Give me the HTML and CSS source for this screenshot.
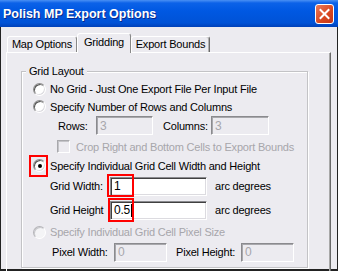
FILE: index.html
```html
<!DOCTYPE html>
<html>
<head>
<meta charset="utf-8">
<link rel="stylesheet" href="styles.css">
</head>
<body>
<div class="window">
  <div class="titlebar">
    <span class="title">Polish MP Export Options</span>
    <span class="close">
      <svg width="19" height="20" viewBox="0 0 19 20"><path d="M5.5 6 L13.5 14 M13.5 6 L5.5 14" stroke="#fff" stroke-width="2" stroke-linecap="square" fill="none"/></svg>
    </span>
  </div>
  <div class="client">
    <div class="tabs">
      <div class="tab t-map">Map Options</div>
      <div class="tab t-grid active">Gridding</div>
      <div class="tab t-bounds">Export Bounds</div>
    </div>
    <div class="panel">
      <fieldset class="group">
        <legend>Grid Layout</legend>
        <div class="row r-a"><span class="radio"></span><span>No Grid - Just One Export File Per Input File</span></div>
        <div class="row r-b"><span class="radio"></span><span>Specify Number of Rows and Columns</span></div>
        <div class="row r-c">
          <span class="lbl lbl-rows">Rows:</span><span class="field disabled w-rows">3</span>
          <span class="lbl lbl-cols">Columns:</span><span class="field disabled w-cols">3</span>
        </div>
        <div class="row r-d"><span class="check"></span><span class="dim">Crop Right and Bottom Cells to Export Bounds</span></div>
        <div class="row r-e"><span class="radio checked"><span class="mark mark-radio"></span></span><span>Specify Individual Grid Cell Width and Height</span></div>
        <div class="row r-f">
          <span class="lbl lbl-grid">Grid Width:</span><span class="field w-grid"><span class="mark mark-w"></span>1</span><span class="unit">arc degrees</span>
        </div>
        <div class="row r-g">
          <span class="lbl lbl-grid">Grid Height</span><span class="field w-grid"><span class="mark mark-h"></span>0.5<span class="caret"></span></span><span class="unit">arc degrees</span>
        </div>
        <div class="row r-h"><span class="radio disabled"></span><span class="dim">Specify Individual Grid Cell Pixel Size</span></div>
        <div class="row r-i">
          <span class="lbl lbl-pw">Pixel Width:</span><span class="field disabled w-px">0</span>
          <span class="lbl lbl-ph">Pixel Height:</span><span class="field disabled w-px">0</span>
        </div>
      </fieldset>
    </div>
  </div>
</div>
</body>
</html>
```
FILE: styles.css
```css
* { box-sizing: border-box; }
body {
  margin: 0;
  font-family: "Liberation Sans", Arial, sans-serif;
  font-size: 11px;
  letter-spacing: -0.2px;
  color: #000;
}
.window {
  width: 338px;
  height: 271px;
  overflow: hidden;
  background: #ecebf0;
}
.titlebar {
  height: 27px;
  display: flex;
  align-items: center;
  justify-content: space-between;
  padding: 0 4px 0 3px;
  background: linear-gradient(#4a90f4 0, #0c62e8 3px, #0058e2 40%, #0052d6 85%, #0040b8 100%);
}
.title {
  color: #fff;
  font-weight: bold;
  font-size: 12.5px;
  letter-spacing: 0;
  text-shadow: 1px 1px #0a2a8a;
  margin-top: 1px;
}
.close {
  width: 19px;
  height: 20px;
  border: 1px solid #fff;
  border-radius: 3px;
  background: linear-gradient(135deg, #e97a5c, #d8461f 60%, #c2361a);
  display: flex;
  margin-top: 1px;
}
.close svg { display: block; margin: -1px; }
.client {
  height: 244px;
  border: 1px solid #222;
  border-top: 0;
  border-bottom-width: 2px;
  padding: 6px 0 0 5px;
}
.tabs {
  display: flex;
  align-items: flex-end;
  height: 19px;
  padding-left: 1px;
  position: relative;
  z-index: 1;
}
.tab {
  height: 16px;
  line-height: 15px;
  text-align: center;
  border: 1px solid;
  border-bottom: 0;
  border-color: #fff #888 transparent #fff;
  border-radius: 3px 3px 0 0;
  background: #ecebf0;
}
.t-map { width: 70px; }
.t-grid { width: 54px; }
.t-bounds { width: 79px; box-shadow: inset -1px 0 #b0b0b0; border-right-color: #6a6a6a; }
.tab.active {
  height: 20px;
  margin-bottom: -1px;
  line-height: 17px;
}
.panel {
  width: 325px;
  height: 230px;
  border: 1px solid;
  border-color: #fff #6a6a6a #6a6a6a #fff;
  box-shadow: inset -1px 0 #a8a8a8;
  padding-top: 11px;
}
.group {
  margin: 0 0 0 14px;
  padding: 0 0 5px 0;
  width: 287px;
  border: 1px solid #c3c3c6;
  box-shadow: inset 1px 1px #fff, 1px 1px #fff;
  min-inline-size: 0;
}
.group legend {
  margin-left: 4px;
  padding: 0 3px;
  line-height: 14px;
  background: #ecebf0;
}
.row {
  display: flex;
  align-items: center;
  white-space: nowrap;
}
.r-a { height: 18px; margin-top: 2px; padding-left: 11px; }
.r-b { height: 17px; padding-left: 11px; }
.r-c { height: 21px; padding-left: 36px; }
.r-d { height: 21px; padding-left: 35px; }
.r-e { height: 17px; padding-left: 11px; }
.r-f { height: 24px; padding-left: 28px; }
.r-g { height: 24px; padding-left: 28px; }
.r-h { height: 20px; padding-left: 11px; }
.r-i { height: 20px; padding-left: 30px; }
.radio {
  position: relative;
  width: 13px;
  height: 13px;
  flex: none;
  margin-right: 4px;
  border-radius: 50%;
  border: 1px solid;
  border-color: #8c8c8c #fff #fff #8c8c8c;
  box-shadow: inset 1px 1px #555, inset -1px -1px #dcdbe0;
  background: #fff;
}
.radio.checked::after {
  content: "";
  position: absolute;
  left: 3.5px;
  top: 3.5px;
  width: 4px;
  height: 4px;
  border-radius: 50%;
  background: #000;
}
.radio.disabled {
  border-color: #b4b4b8 #fff #fff #b4b4b8;
  box-shadow: inset 1px 1px #c8c8cc;
  background: #f4f4f6;
}
.check {
  width: 13px;
  height: 13px;
  flex: none;
  margin-right: 6px;
  border: 1px solid;
  border-color: #a8a8ac #fff #fff #a8a8ac;
  box-shadow: inset 1px 1px #c4c4c8;
  background: #ecebf0;
}
.dim { color: #a7a6ab; }
.lbl { flex: none; }
.lbl-rows { width: 38px; }
.lbl-cols { width: 48px; margin-left: 10px; }
.lbl-grid { width: 60px; }
.lbl-pw { width: 62px; }
.lbl-ph { width: 65px; margin-left: 9px; }
.field {
  position: relative;
  display: flex;
  align-items: center;
  height: 19px;
  padding-left: 3px;
  border: 1px solid;
  border-color: #8a8a8e #fff #fff #8a8a8e;
  box-shadow: inset 1px 1px #404040, inset -1px -1px #dcdbe0;
  background: #fff;
  font-size: 12px;
}
.field.disabled {
  background: #ecebf0;
  color: #a7a6ab;
  box-shadow: inset 1px 1px #a8a8ac;
}
.w-rows { width: 57px; }
.w-cols { width: 58px; }
.w-grid { width: 97px; }
.w-px { width: 53px; }
.unit { margin-left: 8px; }
.caret {
  display: inline-block;
  width: 1px;
  height: 13px;
  background: #000;
  margin-left: 1px;
}
.mark {
  position: absolute;
  border: 2px solid #ff0000;
}
.mark-radio { left: -5px; top: -5px; width: 19px; height: 22px; }
.mark-w { left: -4px; top: -4px; width: 27px; height: 23px; }
.mark-h { left: -3px; top: -4px; width: 26px; height: 24px; }
```
